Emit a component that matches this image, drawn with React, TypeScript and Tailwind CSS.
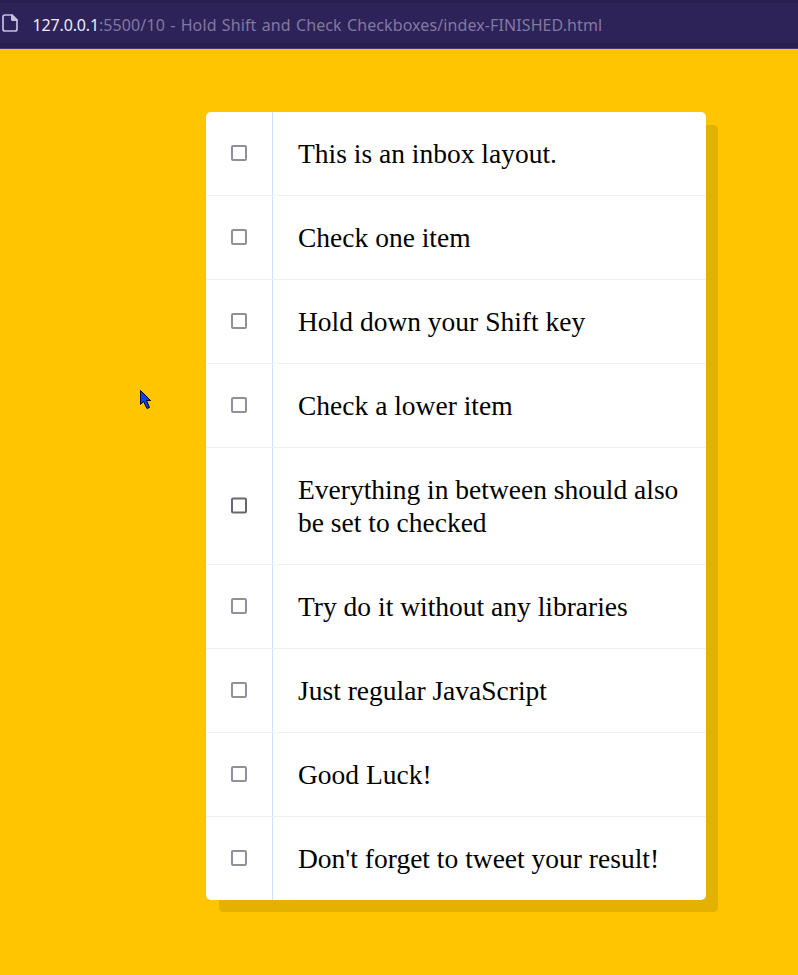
const items: string[] = [
  "This is an inbox layout.",
  "Check one item",
  "Hold down your Shift key",
  "Check a lower item",
  "Everything in between should also be set to checked",
  "Try do it without any libraries",
  "Just regular JavaScript",
  "Good Luck!",
  "Don't forget to tweet your result!",
];

function rowClass(i: number) {
  if (i === 4) return "h-[117px] border-b";
  return i === items.length - 1 ? "h-[83px]" : "h-[84px] border-b";
}

export default function App() {
  return (
    <div className="relative flex h-[975px] w-[798px] flex-col overflow-hidden bg-[#ffc600]">
      <header className="shrink-0 border-b border-[#45396f] bg-[#281e4c] pt-[3px] pb-[5px]">
        <div className="flex h-10 items-center bg-[#2d2359] font-['Noto_Sans',sans-serif] text-[16px]">
          <svg className="mb-px shrink-0" width="20" height="20" viewBox="0 0 20 20">
            <path d="M5 2H12L17 7V16A2 2 0 0 1 15 18H5A2 2 0 0 1 3 16V4A2 2 0 0 1 5 2Z" fill="none" stroke="#c6bfe4" strokeWidth="1.7" />
            <path d="M11 1.5H12.5L17.5 6.5V8H12.5A1.5 1.5 0 0 1 11 6.5Z" fill="#c6bfe4" />
          </svg>
          <span className="ml-[12.5px] pt-[4px] whitespace-nowrap tracking-[0.1px] [word-spacing:1px] text-[#8179a0]">
            <span className="tracking-[-0.15px] text-[#f0ecfa]">127.0.0.1</span>:5500/10 - Hold Shift and Check Checkboxes/index-FINISHED.html
          </span>
        </div>
      </header>
      <main className="mt-[63px] ml-[206px] w-[500px] rounded-[5px] bg-white shadow-[12.5px_12.5px_0_-0.5px_rgba(0,0,0,0.1)]">
        {items.map((label, i) => (
          <div key={label} className={`flex items-stretch border-[#eef0f3] ${rowClass(i)}`}>
            <div className="flex w-[67px] items-center border-r border-[#cce0ff] pl-[25px]">
              <div className={`size-4 rounded-[2px] border-2 ${i === 4 ? "-translate-y-[0.5px] border-[#676774]" : "-translate-y-px border-[#8f8f9d]"}`} />
            </div>
            <p className="flex flex-1 items-center pl-[25px] font-['Liberation_Serif',serif] text-[27.5px] leading-[33px] text-black">{label}</p>
          </div>
        ))}
      </main>
      <svg className="absolute left-[139px] top-[389px]" width="14" height="22" viewBox="0 0 14 22">
        <path d="M1.5 1.5V15.5L4.5 12.5L8 19.5L10.5 18.5L7.5 11.5H11.5Z" fill="#0b3cff" stroke="#000" />
      </svg>
    </div>
  );
}
